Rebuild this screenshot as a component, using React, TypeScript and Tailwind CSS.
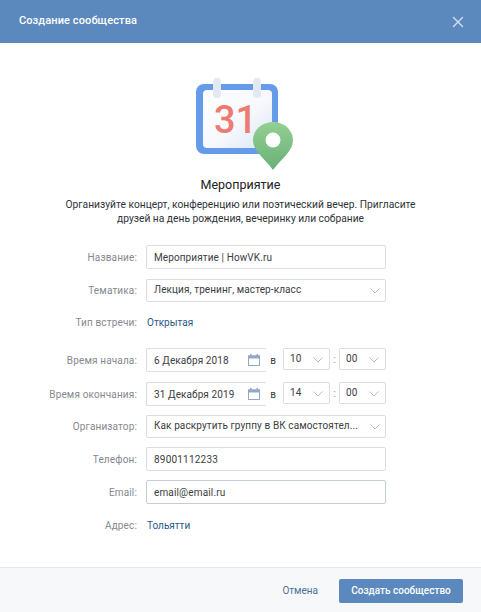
import React from 'react'
import { X } from 'lucide-react'

function Label({ children }: { children: React.ReactNode }) {
  return <div className="w-[146px] shrink-0 pr-[9px] text-right tracking-[0.15px] text-[#85888e]">{children}</div>
}

function Field({ value, dark, spacing = 'tracking-[0.1px]' }: { value: string; dark?: boolean; spacing?: string }) {
  return (
    <div
      className={`flex h-[24px] w-[240px] items-center rounded-[2px] border bg-white pl-[7px] text-[#3a3d42] ${spacing} ${
        dark ? 'border-[#c5ccd3]' : 'border-[#d9dee3]'
      }`}
    >
      {value}
    </div>
  )
}

function Chevron() {
  return (
    <svg width="10" height="6" viewBox="0 0 10 6" className="mt-[3px] shrink-0">
      <path d="M0.5 0.5L5 5L9.5 0.5" fill="none" stroke="#b4bec9" strokeWidth="1" />
    </svg>
  )
}

function Select({ value, width = 'w-[240px]' }: { value: string; width?: string }) {
  return (
    <div className={`flex h-[23px] ${width} items-center justify-between rounded-[2px] border border-[#d9dee3] bg-white pb-[3px] pl-[7px] pr-[5px] tracking-[0.1px] text-[#3a3d42]`}>
      <span>{value}</span>
      <Chevron />
    </div>
  )
}

function TimeSelect({ value }: { value: string }) {
  return (
    <div className="flex h-[22px] w-[47px] items-center justify-between rounded-[2px] border border-[#d9dee3] bg-white pb-[2px] pl-[6px] pr-[6px] tracking-[0.2px] text-[#3a3d42]">
      <span>{value}</span>
      <Chevron />
    </div>
  )
}

function CalendarGlyph() {
  return (
    <svg width="12" height="12" viewBox="0 0 12 12" className="shrink-0">
      <rect x="0.5" y="2" width="11" height="9.5" fill="none" stroke="#93a8c6" strokeWidth="1" />
      <rect x="0" y="1.5" width="12" height="3" fill="#93a8c6" />
      <rect x="2" y="0" width="1.5" height="2" fill="#93a8c6" />
      <rect x="8.5" y="0" width="1.5" height="2" fill="#93a8c6" />
    </svg>
  )
}

function DateRow({ label, date, hour }: { label: string; date: string; hour: string }) {
  return (
    <div className="flex items-center">
      <Label>{label}</Label>
      <div className="flex items-start">
        <div className="flex h-[24px] w-[120px] items-center justify-between rounded-l-[2px] border border-r-0 border-[#d9dee3] bg-white pl-[7px] pr-[6px] tracking-[0.1px] text-[#3a3d42]">
          <span>{date}</span>
          <CalendarGlyph />
        </div>
        <span className="mr-[3px] mt-[5px] w-[14px] text-center text-[#3a3d42]">в</span>
        <TimeSelect value={hour} />
        <span className="mt-[4px] w-[9px] text-center text-[#85888e]">:</span>
        <TimeSelect value="00" />
      </div>
    </div>
  )
}

function EventArt() {
  return (
    <svg width="97" height="92" viewBox="0 0 97 92">
      <defs>
        <linearGradient id="page" x1="0" y1="0" x2="1" y2="1">
          <stop offset="0" stopColor="#ffffff" />
          <stop offset="0.55" stopColor="#f6f8fc" />
          <stop offset="1" stopColor="#d9e5f5" />
        </linearGradient>
        <linearGradient id="pin" x1="0" y1="0" x2="0" y2="1">
          <stop offset="0" stopColor="#93cf93" />
          <stop offset="1" stopColor="#69b077" />
        </linearGradient>
      </defs>
      <rect x="0" y="6" width="82" height="70" rx="8" fill="#659be8" />
      <rect x="7" y="12" width="69" height="58" rx="4" fill="url(#page)" />
      <rect x="17" y="0" width="8" height="20" rx="4" fill="#e3e9f2" />
      <rect x="57" y="0" width="8" height="20" rx="4" fill="#e3e9f2" />
      <text x="39.5" y="55" textAnchor="middle" fontFamily="Roboto, sans-serif" fontWeight="500" fontSize="38" fill="#ee7a72">31</text>
      <path d="M77 44c-11 0-20 8-20 18 0 11 11 18 20 30 9-12 20-19 20-30 0-10-9-18-20-18z" fill="url(#pin)" />
      <circle cx="77" cy="62" r="7.5" fill="#ffffff" />
    </svg>
  )
}

export default function App() {
  return (
    <div className="flex h-[612px] w-[481px] flex-col bg-white font-['Roboto',sans-serif] text-[10px]">
      <header className="flex h-[43px] shrink-0 items-center justify-between bg-[#5b88bd] pl-[19px] pr-[14px] text-white">
        <span className="text-[11px] font-medium tracking-[0.1px]">Создание сообщества</span>
        <X size={18} strokeWidth={1.8} className="text-[#d5e0ed]" />
      </header>

      <main className="flex flex-1 flex-col">
        <div className="flex justify-center pl-[8px] pt-[35px]">
          <EventArt />
        </div>
        <h1 className="mt-[6px] text-center text-[12.5px] leading-[18px] text-[#222]">Мероприятие</h1>
        <p className="mt-[4px] text-center text-[10.25px] leading-[14px] text-[#2f3237]">
          Организуйте концерт, конференцию или поэтический вечер. Пригласите
          <br />
          друзей на день рождения, вечеринку или собрание
        </p>

        <div className="mt-[19px] flex flex-col">
          <div className="flex items-center">
            <Label>Название:</Label>
            <Field value="Мероприятие | HowVK.ru" />
          </div>
          <div className="mt-[10px] flex items-center">
            <Label>Тематика:</Label>
            <Select value="Лекция, тренинг, мастер-класс" />
          </div>
          <div className="mt-[13px] flex h-[14px] items-center">
            <Label>Тип встречи:</Label>
            <a className="pl-[1px] text-[#2a5885]">Открытая</a>
          </div>
          <div className="mt-[19px]">
            <DateRow label="Время начала:" date="6 Декабря 2018" hour="10" />
          </div>
          <div className="mt-[10px]">
            <DateRow label="Время окончания:" date="31 Декабря 2019" hour="14" />
          </div>
          <div className="mt-[9px] flex items-center">
            <Label>Организатор:</Label>
            <Select value="Как раскрутить группу в ВК самостоятел..." />
          </div>
          <div className="mt-[9px] flex items-center">
            <Label>Телефон:</Label>
            <Field value="89001112233" spacing="tracking-[0.2px]" />
          </div>
          <div className="mt-[9px] flex items-center">
            <Label>Email:</Label>
            <Field value="email@email.ru" dark spacing="tracking-[0.15px]" />
          </div>
          <div className="mt-[14px] flex h-[14px] items-center">
            <Label>Адрес:</Label>
            <a className="pl-[1px] text-[#2a5885]">Тольятти</a>
          </div>
        </div>
      </main>

      <footer className="flex h-[45px] shrink-0 items-center justify-end border-t border-[#e7e8ec] bg-[#f7f8fa] pr-[18px] pt-[1px]">
        <a className="mr-[21px] text-[#4b6f96]">Отмена</a>
        <button className="flex h-[24px] w-[124px] items-center justify-center rounded-[2px] bg-[#5b88bd] text-[10px] font-medium text-white">
          Создать сообщество
        </button>
      </footer>
    </div>
  )
}
